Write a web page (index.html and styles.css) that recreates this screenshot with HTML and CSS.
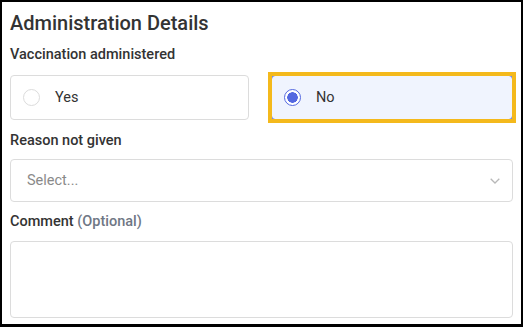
FILE: index.html
```html
<!DOCTYPE html>
<html lang="en">
<head>
    <meta charset="UTF-8">
    <meta name="viewport" content="width=device-width, initial-scale=1.0">
    <title>Administration Details</title>
    <link rel="stylesheet" href="styles.css">
</head>
<body>
    <div class="panel">
        <h2 class="panel-title">Administration Details</h2>

        <div class="field field-choice">
            <label class="field-label">Vaccination administered</label>
            <div class="choice-row">
                <label class="choice">
                    <span class="radio"></span>
                    <span class="choice-text">Yes</span>
                </label>
                <label class="choice selected">
                    <span class="radio"></span>
                    <span class="choice-text">No</span>
                </label>
            </div>
        </div>

        <div class="field field-select">
            <label class="field-label">Reason not given</label>
            <div class="select">
                <span class="placeholder">Select...</span>
                <svg class="chevron" width="10" height="6" viewBox="0 0 10 6">
                    <path d="M0.7 0.8 L5 5 L9.3 0.8" fill="none" stroke="#b8b8b8" stroke-width="1.3"/>
                </svg>
            </div>
        </div>

        <div class="field field-comment">
            <label class="field-label">Comment <span class="optional">(Optional)</span></label>
            <div class="textarea"></div>
        </div>
    </div>
</body>
</html>
```

FILE: styles.css
```css
:root {
    --text: #333333;
    --muted: #6f7785;
    --border: #dcdcdc;
    --blue: #5468e0;
    --blue-bg: #f0f4fe;
    --focus: #f4b91c;
}

body {
    margin: 0;
    padding: 0;
    background-color: #ffffff;
    font-family: Roboto, 'Noto Sans', sans-serif;
    color: var(--text);
}

.panel {
    box-sizing: border-box;
    width: 523px;
    height: 327px;
    border: 2px solid #000;
    border-bottom-width: 3px;
    padding: 9px 8px 0;
    overflow: hidden;
}

.panel-title {
    margin: 0 0 10px;
    font-size: 20px;
    line-height: 24px;
    font-weight: 500;
}

.field-label {
    display: block;
    font-size: 14.5px;
    line-height: 20px;
    font-weight: 500;
}

.field-choice .field-label {
    margin-bottom: 10px;
}

.field-select {
    margin-top: 11px;
}

.field-select .field-label {
    margin-bottom: 8px;
}

.field-comment {
    margin-top: 10px;
}

.field-comment .field-label {
    margin-bottom: 9px;
}

.optional {
    color: var(--muted);
}

.choice-row {
    display: grid;
    grid-template-columns: 239px 1fr;
    gap: 22px;
}

.choice {
    position: relative;
    display: flex;
    align-items: center;
    gap: 15px;
    height: 45px;
    box-sizing: border-box;
    padding: 0 12px;
    border: 1px solid var(--border);
    border-radius: 4px;
    font-size: 14.5px;
}

.radio {
    width: 17px;
    height: 17px;
    box-sizing: border-box;
    border: 1px solid var(--border);
    border-radius: 50%;
    background: #fff;
}

.choice.selected {
    border-color: var(--blue);
    background-color: var(--blue-bg);
}

/* square focus ring round the selected card */
.choice.selected::before {
    content: "";
    position: absolute;
    top: -4px;
    left: -4px;
    right: -4px;
    bottom: -4px;
    border: 4px solid var(--focus);
}

.choice.selected .radio {
    border: 1.5px solid var(--blue);
    background: radial-gradient(circle, var(--blue) 0 5px, #fff 5.5px);
}

.select {
    display: flex;
    align-items: center;
    justify-content: space-between;
    height: 43px;
    box-sizing: border-box;
    padding: 0 12px 0 16px;
    border: 1px solid var(--border);
    border-radius: 4px;
    font-size: 14.5px;
}

.placeholder {
    color: #8a8a8a;
}

.textarea {
    height: 77px;
    box-sizing: border-box;
    border: 1px solid var(--border);
    border-radius: 4px;
}
```
